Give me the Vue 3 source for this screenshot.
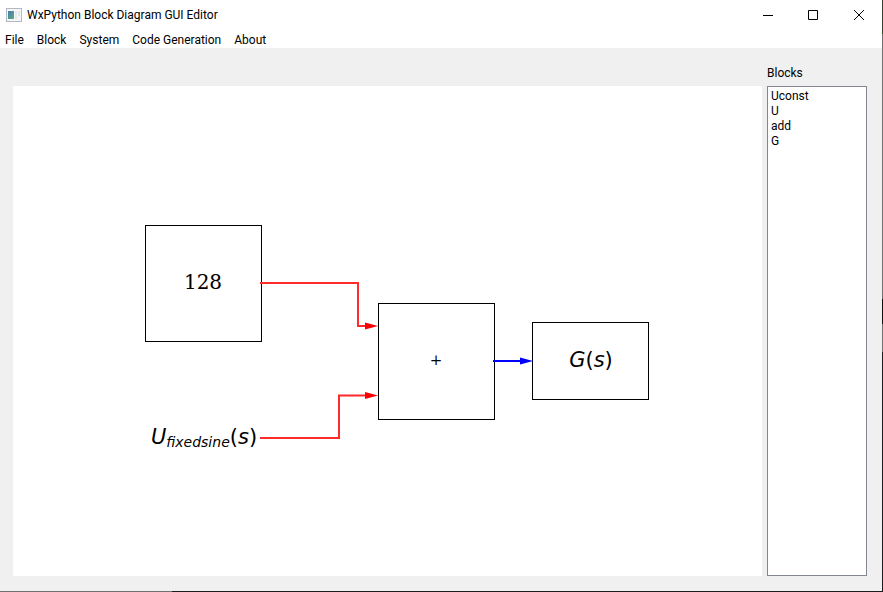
<script setup>
import { ref } from 'vue'

const menus = ['File', 'Block', 'System', 'Code Generation', 'About']
const blocks = ['Uconst', 'U', 'add', 'G']
const selected = ref([])
</script>

<template>
  <div class="window">
    <header class="titlebar">
      <svg class="app-icon" width="16" height="14" viewBox="0 0 16 14" aria-hidden="true">
        <defs>
          <linearGradient id="pane" x1="0" y1="0" x2="1" y2="1">
            <stop offset="0" stop-color="#4a78b0" />
            <stop offset="1" stop-color="#56b07c" />
          </linearGradient>
        </defs>
        <rect x="0.5" y="0.5" width="15" height="13" fill="#f6f6f8" stroke="#b4b8c2" />
        <rect x="2" y="3" width="6" height="8" fill="url(#pane)" />
        <rect x="9" y="3" width="2" height="8" fill="#e6e8ec" />
        <rect x="12" y="3" width="2" height="5" fill="#dfe6e4" />
      </svg>
      <h1 class="title">WxPython Block Diagram GUI Editor</h1>
      <div class="controls">
        <button type="button" aria-label="Minimize">
          <svg width="12" height="12" viewBox="0 0 12 12"><path d="M2 6.5h10" /></svg>
        </button>
        <button type="button" aria-label="Maximize">
          <svg width="12" height="12" viewBox="0 0 12 12"><path d="M1.5 1.5h9v9h-9z" /></svg>
        </button>
        <button type="button" aria-label="Close">
          <svg width="12" height="12" viewBox="0 0 12 12"><path d="M1 1l10 10M11 1L1 11" /></svg>
        </button>
      </div>
    </header>

    <nav class="menubar">
      <button v-for="menu in menus" :key="menu" type="button">{{ menu }}</button>
    </nav>

    <main class="workspace">
      <section class="canvas">
        <svg class="diagram" viewBox="0 0 749 490">
          <g class="box">
            <rect x="132.5" y="139.5" width="116" height="116" />
            <rect x="365.5" y="217.5" width="116" height="116" />
            <rect x="519.5" y="236.5" width="116" height="77" />
          </g>

          <g class="wire red">
            <path d="M247 197H345V240H356" />
            <path d="M247 352H326V309.5H356" />
          </g>
          <g class="head red">
            <path d="M352 236.5L365 240L352 243.5z" />
            <path d="M352 306L365 309.5L352 313z" />
          </g>
          <path class="wire blue" d="M480 275H510" />
          <path class="head blue" d="M507 271.5L520 275L507 278.5z" />

          <text class="serif" x="190" y="203">128</text>
          <text class="serif plus" x="423" y="279">+</text>
          <text class="math" x="191" y="358"><tspan class="it">U</tspan><tspan class="it sub" dy="3">fixedsine</tspan><tspan dy="-3">(</tspan><tspan class="it">s</tspan>)</text>
          <text class="math" x="578" y="281"><tspan class="it">G</tspan>(<tspan class="it">s</tspan>)</text>
        </svg>
      </section>

      <aside class="side">
        <label for="block-list">Blocks</label>
        <select id="block-list" v-model="selected" multiple>
          <option v-for="block in blocks" :key="block" :value="block">{{ block }}</option>
        </select>
      </aside>
    </main>
  </div>
</template>

<style>
body {
  margin: 0;
}
</style>

<style scoped>
.window {
  box-sizing: border-box;
  display: flex;
  flex-direction: column;
  height: 100vh;
  padding: 0 1px 1px 0;
  background:
    linear-gradient(to right, #707070 172px, #1c1c1e 172px) left bottom / 100% 1px no-repeat,
    linear-gradient(to bottom, #34442c 34px, #707070 34px 299px, #111 299px 324px, #707070 324px 352px, #1c1c1e 352px) right top / 1px 100% no-repeat,
    #f0f0f0;
  color: #000;
  font-family: Roboto, "Noto Sans", sans-serif;
  font-size: 12px;
  line-height: 20px;
}

button {
  padding: 0;
  border: 0;
  background: none;
  color: inherit;
  font: inherit;
}

.titlebar {
  display: flex;
  align-items: center;
  height: 29px;
  padding-left: 6px;
  background: #fff;
}

.app-icon {
  margin-right: 5px;
}

.title {
  flex: 1;
  margin: 0;
  font-size: 12px;
  font-weight: 400;
}

.controls {
  display: flex;
  height: 100%;
}

.controls button {
  display: grid;
  place-items: center;
  width: 46px;
}

.controls path {
  fill: none;
  stroke: #000;
}

.menubar {
  box-sizing: border-box;
  display: flex;
  gap: 13px;
  height: 19px;
  padding: 1px 0 0 5px;
  background: #fff;
}

.workspace {
  display: flex;
  flex: 1;
  gap: 5px;
  min-height: 0;
  padding: 15px 15px 15px 13px;
}

.canvas {
  flex: 1;
  min-width: 0;
  margin-top: 23px;
  background: #fff;
}

.diagram {
  display: block;
  width: 100%;
  height: 100%;
}

.box {
  fill: #fff;
  stroke: #000;
}

.wire {
  fill: none;
  stroke-width: 2;
}

.wire.red {
  stroke: #ff2a2a;
}

.wire.blue {
  stroke: #00f;
}

.head.red {
  fill: #f00;
}

.head.blue {
  fill: #00f;
}

.serif {
  font-family: "DejaVu Serif", serif;
  font-size: 20px;
  text-anchor: middle;
}

.plus {
  font-size: 15px;
}

.math {
  font-family: "DejaVu Sans", sans-serif;
  font-size: 21px;
  text-anchor: middle;
}

.it {
  font-style: italic;
}

.sub {
  font-size: 14px;
}

.side {
  display: flex;
  flex-direction: column;
  gap: 3px;
  width: 100px;
}

.side label {
  height: 20px;
}

.side select {
  box-sizing: border-box;
  flex: 1;
  width: 100%;
  padding: 2px 0;
  border: 1px solid #828790;
  border-radius: 0;
  outline: 0;
  background: #fff;
  color: inherit;
  font: inherit;
  overflow: hidden;
}

.side option {
  min-height: 15px;
  padding: 0 3px;
  line-height: 15px;
}
</style>
